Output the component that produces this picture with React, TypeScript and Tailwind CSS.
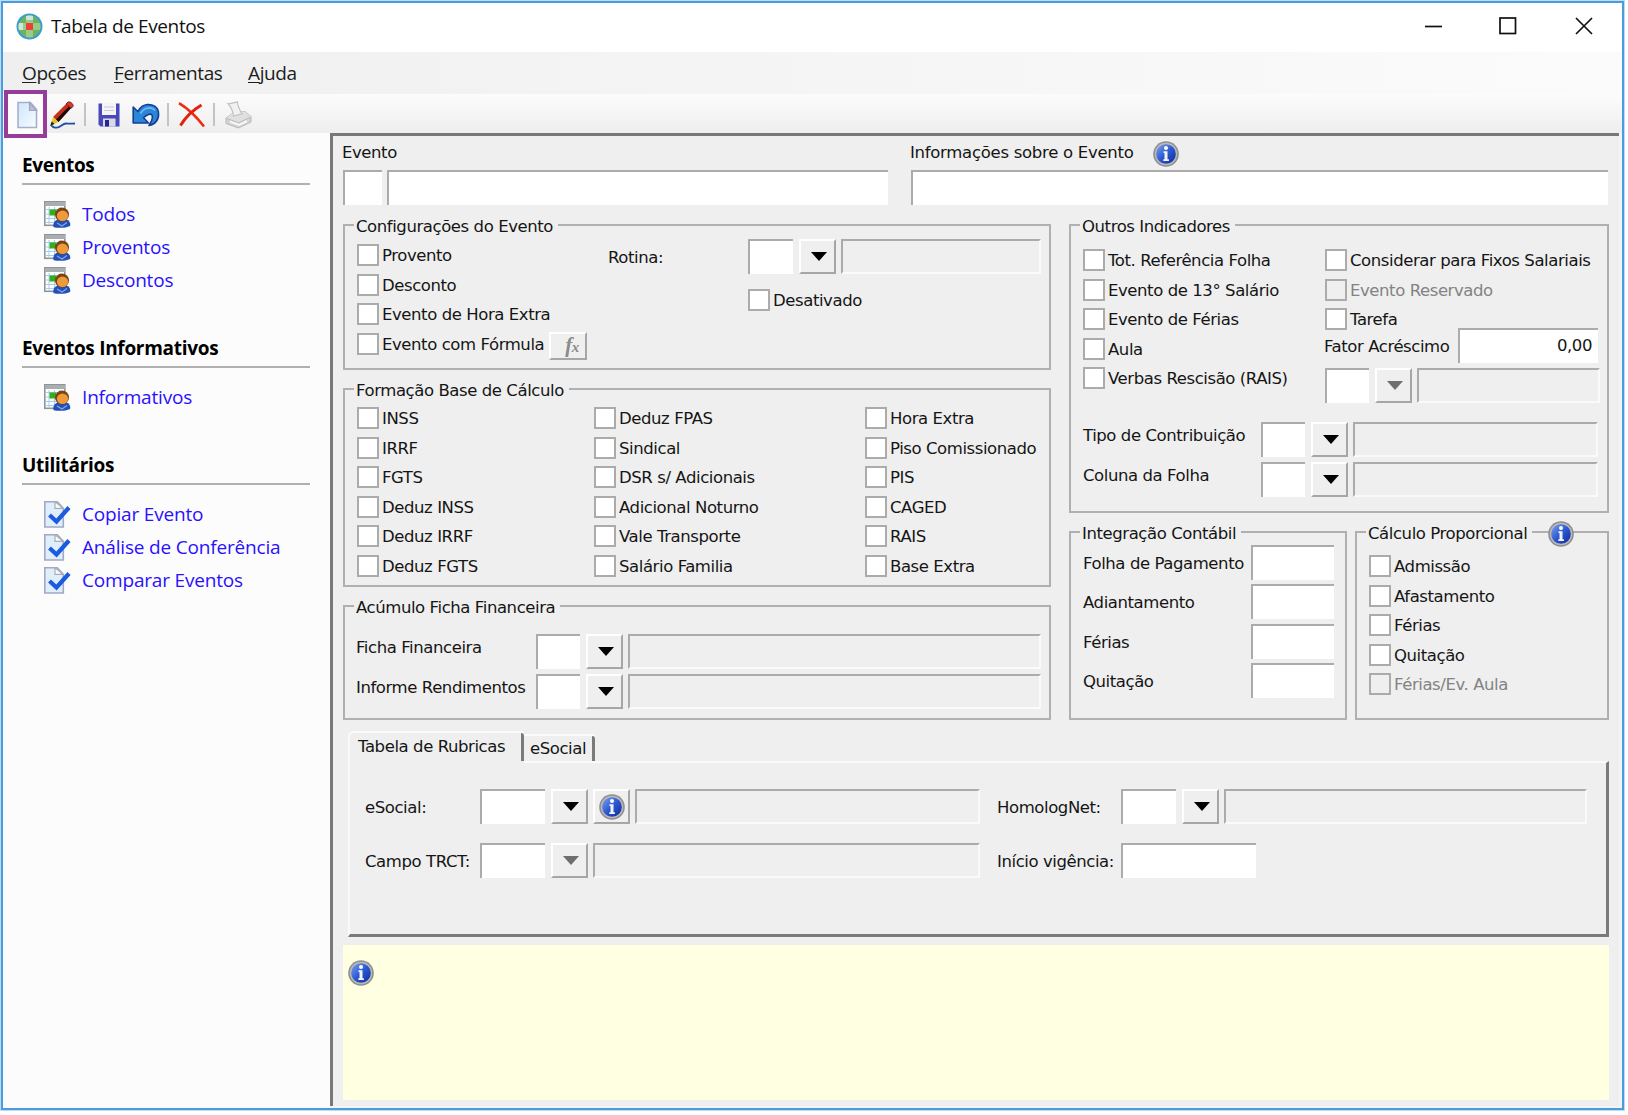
import React from 'react';

const SIDE_SECTIONS = [
  { title: 'Eventos', icon: 'grid', items: ['Todos', 'Proventos', 'Descontos'] },
  { title: 'Eventos Informativos', icon: 'grid', items: ['Informativos'] },
  { title: 'Utilitários', icon: 'check', items: ['Copiar Evento', 'Análise de Conferência', 'Comparar Eventos'] },
];

const BASE_COLUMNS = [
  ['INSS', 'IRRF', 'FGTS', 'Deduz INSS', 'Deduz IRRF', 'Deduz FGTS'],
  ['Deduz FPAS', 'Sindical', 'DSR s/ Adicionais', 'Adicional Noturno', 'Vale Transporte', 'Salário Familia'],
  ['Hora Extra', 'Piso Comissionado', 'PIS', 'CAGED', 'RAIS', 'Base Extra'],
];

/* ---------- icons ---------- */

const AppLogo = () => (
  <svg width="27" height="27" viewBox="0 0 27 27">
    <defs>
      <clipPath id="globe"><circle cx="13.5" cy="13.5" r="11" /></clipPath>
    </defs>
    <circle cx="13.5" cy="13.5" r="13" fill="#3b9bd3" />
    <g clipPath="url(#globe)">
      <rect width="27" height="27" fill="#6db35f" />
      <rect x="10" width="7" height="27" fill="#98cb86" />
      <rect y="10" width="27" height="7" fill="#98cb86" />
      <rect x="10" y="1" width="7" height="6" fill="#cfe6dc" />
      <rect x="1" y="10" width="6" height="7" fill="#cfe6dc" />
    </g>
    <rect x="10" y="10" width="7" height="7" fill="#ec3f3a" />
  </svg>
);

const InfoIcon = () => (
  <svg width="26" height="26" viewBox="0 0 26 26" className="block shrink-0">
    <defs>
      <linearGradient id="info" x1="0" y1="0" x2="1" y2="1">
        <stop offset="0" stopColor="#7ba4f2" />
        <stop offset="0.5" stopColor="#2d58d2" />
        <stop offset="1" stopColor="#0c2a9c" />
      </linearGradient>
    </defs>
    <circle cx="13" cy="13" r="12.8" fill="#8f8f8f" />
    <circle cx="13" cy="13" r="11.2" fill="#b9b9b9" />
    <circle cx="13" cy="13" r="9.8" fill="url(#info)" />
    <circle cx="13" cy="7" r="2" fill="#fff" />
    <path d="M10.5 10.2h4v8h1.4v1.8h-5.6v-1.8h1.2v-6.2h-1z" fill="#f2f4fb" />
  </svg>
);

const NewIcon = () => (
  <svg width="21" height="28" viewBox="0 0 21 28">
    <defs>
      <linearGradient id="sheet" x1="0" y1="0" x2="1" y2="1">
        <stop offset="0" stopColor="#cde6fb" />
        <stop offset="1" stopColor="#f8fcff" />
      </linearGradient>
    </defs>
    <path d="M1 1.5h12.5l6 7V26.5H1z" fill="url(#sheet)" stroke="#a9afca" strokeWidth="1.6" />
    <path d="M12.500 1.500v8h7z" fill="#b9bfce" stroke="#9fa6c4" strokeWidth="1.2" />
  </svg>
);

const PencilIcon = () => (
  <svg width="28" height="28" viewBox="0 0 28 28">
    <path d="M2 24c2 3 6 3.500 9 1.500s4-3 6-3 3 .5 9 0" fill="none" stroke="#1f4fa3" strokeWidth="1.8" />
    <path d="M4 16 18 2l5 4L9.500 21z" fill="#c8301c" />
    <path d="M7 18.500 21 4.300l2 1.700L9.500 21z" fill="#1a0d0a" />
    <path d="M17 3l2-2c2-.7 5 1.200 5.300 4l-2 2.300z" fill="#d43a2a" stroke="#7c1710" strokeWidth="0.8" />
    <path d="M4 16l5.500 5L2 24z" fill="#e9c21d" />
    <path d="M2.700 20.500 1.200 24.700l4.500-1.800z" fill="#222" />
  </svg>
);

const SaveIcon = () => (
  <svg width="22" height="24" viewBox="0 0 22 24">
    <path d="M0.500 0.500h21v23H2.500l-2-2z" fill="#4848b8" />
    <rect x="4" y="0" width="14" height="12" fill="#f4f4f6" />
    <path d="M6 4h10M6 7.500h10" stroke="#c9c9cf" strokeWidth="1.2" />
    <rect x="5" y="15.500" width="12.500" height="8" fill="#d8d8ea" />
    <rect x="7" y="17" width="4" height="6.500" fill="#25258a" />
  </svg>
);

const UndoIcon = () => (
  <svg width="28" height="24" viewBox="0 0 28 24">
    <path
      d="M1.200 4v16h15.300l-5-5.300c3-3 7.500-5 8.700-2.200 1 3-1 6.500-3.200 10C23.500 21.500 27 16.500 26.500 10 26 3.500 20.500 1.200 15.500 1.500 11.500 1.800 8 4.500 5.800 8.500z"
      fill="#2b86d8"
      stroke="#123f96"
      strokeWidth="1.6"
      strokeLinejoin="round"
    />
    <path d="M8.500 10.500c3.500-6 11-7.500 14.500-3" fill="none" stroke="#6fbcf2" strokeWidth="1.6" />
  </svg>
);

const DeleteIcon = () => (
  <svg width="27" height="26" viewBox="0 0 27 26">
    <path d="M1 1.200C9 6 19 15.500 26 24.500" fill="none" stroke="#ee2a10" strokeWidth="2.6" />
    <path d="M23.500 3C15 8 7 16 2.500 23.500" fill="none" stroke="#e0240c" strokeWidth="3" />
  </svg>
);

const PrintIcon = () => (
  <svg width="27" height="28" viewBox="0 0 27 28">
    <path d="M1 17 8 12l12-1.500 6 5v5.500L13.500 27 1 22.500z" fill="#d3d3d3" stroke="#b9b9b9" strokeWidth="1" />
    <path d="M1 17l7-5 12-1.500 6 5-12.500 6z" fill="#e0e0e0" />
    <path d="M3 2.500C6 2.800 9 1.500 12.500.8c0 5 2.500 8.500 4.500 12L8.500 15C8 10 6 6 3 2.500z" fill="#f1f1f1" stroke="#c2c2c2" strokeWidth="1.2" />
    <path d="M5 20.500l9 3.300L22 20" fill="none" stroke="#f7f7f7" strokeWidth="2" />
    <path d="M1.500 17.300 13.500 21.800 26 16" fill="none" stroke="#bdbdbd" strokeWidth="1" />
  </svg>
);

const GridUserIcon = () => (
  <svg width="27" height="27" viewBox="0 0 27 27" className="block shrink-0">
    <rect x="0.800" y="0.800" width="20" height="23.500" fill="#fff" stroke="#8e9498" strokeWidth="1.6" />
    <rect x="1" y="1" width="20" height="4" fill="#a9aeb1" />
    <path d="M1 8.500h20M1 13h20M1 17.500h20M1 21.500h20M5 6v18M10.500 6v18M16 6v18" stroke="#a5cdea" strokeWidth="1" />
    <rect x="5.500" y="8.500" width="6.500" height="6" fill="#2fae1e" />
    <path d="M9.500 26c-1-3 1-6.500 4-7.500h9c3 1 4.500 4.500 3.500 6.500-4 2-12 2.500-16.500 1z" fill="#2450b5" />
    <path d="M13 22l5 3 5-3.500" stroke="#7ea7ee" strokeWidth="1.2" fill="none" />
    <circle cx="18" cy="13.500" r="7" fill="#7b4511" />
    <ellipse cx="18.500" cy="14.700" rx="5.600" ry="5.300" fill="#ef9a3c" />
  </svg>
);

const SheetCheckIcon = () => (
  <svg width="27" height="27" viewBox="0 0 27 27" className="block shrink-0">
    <path d="M0.800 0.800h12.500l6 6.500v18.700H0.800z" fill="#dfeefb" stroke="#a3a8c6" strokeWidth="1.6" />
    <path d="M11 .8v6.500h8z" fill="#fff" stroke="#a9adb5" strokeWidth="1.2" />
    <path d="M5.500 14l7 6.500L25 6.500" fill="none" stroke="#1b5be0" strokeWidth="4.2" />
  </svg>
);

/* ---------- controls ---------- */

const Input = ({ className = '', children }: { className?: string; children?: React.ReactNode }) => (
  <div className={`h-[35px] shrink-0 border-t-2 border-l-2 border-[#ababab] bg-white ${className}`}>{children}</div>
);

const ReadOnly = ({ className = 'flex-1' }: { className?: string }) => (
  <div className={`h-[35px] border-2 border-t-[#ababab] border-l-[#ababab] border-r-[#fafafa] border-b-[#fafafa] ${className}`} />
);

const BevelButton = ({ className = 'w-[37px] h-[35px]', children }: { className?: string; children?: React.ReactNode }) => (
  <button className={`shrink-0 flex items-center justify-center border-2 border-t-white border-l-white border-r-[#a6a6a6] border-b-[#a6a6a6] ${className}`}>
    {children}
  </button>
);

const Arrow = ({ disabled = false }: { disabled?: boolean }) => (
  <svg width="16" height="9" viewBox="0 0 16 9" className="ml-[3px]">
    <path d="M0 0h16L8 9z" fill={disabled ? '#6e6e6e' : '#000'} />
  </svg>
);

const Lookup = ({ disabled = false, code = 'w-[44px]', extra }: { disabled?: boolean; code?: string; extra?: React.ReactNode }) => (
  <div className="flex flex-1">
    <Input className={code} />
    <div className="flex flex-1 gap-[5px] ml-[6px]">
      <BevelButton><Arrow disabled={disabled} /></BevelButton>
      {extra}
      <ReadOnly />
    </div>
  </div>
);

const Check = ({ label, disabled = false, children }: { label: string; disabled?: boolean; children?: React.ReactNode }) => (
  <div className="flex items-start h-[29.6px]">
    <div className={`w-[22px] h-[22px] shrink-0 border-2 border-[#ababab] ${disabled ? 'bg-[#efefef]' : 'bg-white'}`} />
    <span className={`ml-[3px] leading-[24px] ${disabled ? 'text-[#838383]' : ''}`}>{label}</span>
    {children}
  </div>
);

const Group = ({ title, className = '', children }: { title: string; className?: string; children?: React.ReactNode }) => (
  <section className={`relative border-2 border-[#b0b0b0] ${className}`}>
    <h3 className="absolute left-[9px] -top-[10px] bg-[#efefef] pl-[2px] pr-[5px] leading-[22px]">{title}</h3>
    {children}
  </section>
);

/* ---------- window parts ---------- */

const TitleBar = () => (
  <header className="h-[49px] bg-white flex items-center pb-[2px] pl-[13px] pr-[29px] font-['Open_Sans','Noto_Sans',sans-serif]">
    <AppLogo />
    <h1 className="ml-2 flex-1 text-[19px] tracking-[-0.38px] text-[#111]">Tabela de Eventos</h1>
    <svg width="168" height="18" viewBox="0 0 168 18" fill="none" stroke="#111" strokeWidth="1.7" className="-mt-[2px]">
      <path d="M0 9.500h17" />
      <rect x="75" y="1" width="15.500" height="15.500" />
      <path d="M151 1l16 16M167 1l-16 16" />
    </svg>
  </header>
);

const MenuBar = () => (
  <nav className="h-[42px] flex pl-[19px] text-[19px] leading-[43px] tracking-[-0.4px] text-[#1c1c1c] bg-gradient-to-r from-[#efefef] to-[#fbfbfb] font-['Open_Sans','Noto_Sans',sans-serif]">
    <span className="w-[92px]"><u className="underline-offset-2">O</u>pções</span>
    <span className="w-[134px]"><u className="underline-offset-2">F</u>erramentas</span>
    <span><u className="underline-offset-2">A</u>juda</span>
  </nav>
);

const Separator = ({ className }: { className: string }) => <div className={`w-[2px] h-[23px] bg-[#c3c3c3] ${className}`} />;

const ToolBar = () => (
  <div className="h-[39px] flex items-center bg-gradient-to-b from-[#fcfcfc] to-[#eeeeee]">
    <button className="relative z-10 w-[43px] h-[48px] ml-[1px] pl-[3px] pt-[2px] flex items-center justify-center shrink-0 border-4 border-[#963c9a] bg-[#fcfcfc]">
      <NewIcon />
    </button>
    <div className="ml-[2px] mt-[2px]"><PencilIcon /></div>
    <Separator className="ml-[7px] mt-[2px]" />
    <div className="ml-[12px] mt-[2px]"><SaveIcon /></div>
    <div className="ml-[12px] mt-[3px]"><UndoIcon /></div>
    <Separator className="ml-[7px] mt-[2px]" />
    <div className="ml-[9px] mt-[3px]"><DeleteIcon /></div>
    <Separator className="ml-[8px] mt-[2px]" />
    <div className="ml-[10px] mt-[2px]"><PrintIcon /></div>
  </div>
);

const SideBar = () => (
  <aside className="w-[327px] shrink-0 bg-[#fcfcfc] pl-[19px] pr-[20px] pt-[18px] text-[19px] font-['Open_Sans','Noto_Sans',sans-serif]">
    {SIDE_SECTIONS.map(section => (
      <div key={section.title} className="mb-[34px]">
        <h2 className="h-[34px] leading-[29px] font-bold text-black tracking-[-0.3px] border-b-2 border-[#b0b0b0]">{section.title}</h2>
        <ul className="pt-[16px] pl-[22px]">
          {section.items.map(item => (
            <li key={item} className="flex h-[33px] text-[#2a10ff] leading-[26px] tracking-[-0.18px]">
              {section.icon === 'grid' ? <GridUserIcon /> : <SheetCheckIcon />}
              <span className="ml-[11px]">{item}</span>
            </li>
          ))}
        </ul>
      </div>
    ))}
  </aside>
);

const Configuracoes = () => (
  <Group title="Configurações do Evento" className="h-[146px] flex pl-[12px] pr-[8px]">
    <div className="w-[251px] pt-[18px]">
      <Check label="Provento" />
      <Check label="Desconto" />
      <Check label="Evento de Hora Extra" />
      <Check label="Evento com Fórmula">
        <BevelButton className="w-[38px] h-[28px] -mt-px ml-auto mr-[21px]">
          <span className="font-['Liberation_Serif',serif] italic font-bold text-[21px] leading-none text-[#8b8b8b] ml-2">
            f<span className="text-[15px]">x</span>
          </span>
        </BevelButton>
      </Check>
    </div>
    <div className="flex-1 pt-[13px]">
      <div className="flex">
        <span className="w-[140px] leading-[38px]">Rotina:</span>
        <Lookup code="w-[45px]" />
      </div>
      <div className="ml-[140px] mt-[12px]">
        <Check label="Desativado" />
      </div>
    </div>
  </Group>
);

const BaseCalculo = () => (
  <Group title="Formação Base de Cálculo" className="h-[199px] mt-[18px] pl-[12px] pt-[17px] grid grid-cols-[237px_271px_1fr]">
    {BASE_COLUMNS.map(col => (
      <div key={col[0]}>{col.map(label => <Check key={label} label={label} />)}</div>
    ))}
  </Group>
);

const FichaFinanceira = () => (
  <Group title="Acúmulo Ficha Financeira" className="h-[115px] mt-[18px] pl-[11px] pr-[8px] pt-[27px] flex flex-col gap-[5px]">
    {['Ficha Financeira', 'Informe Rendimentos'].map(label => (
      <div key={label} className="flex">
        <span className="w-[180px] leading-[27px]">{label}</span>
        <Lookup />
      </div>
    ))}
  </Group>
);

const OutrosIndicadores = () => (
  <Group title="Outros Indicadores" className="h-[289px] pl-[12px] pr-[9px] pt-[23px]">
    <div className="flex h-[153px]">
      <div className="w-[242px]">
        <Check label="Tot. Referência Folha" />
        <Check label="Evento de 13° Salário" />
        <Check label="Evento de Férias" />
        <Check label="Aula" />
        <Check label="Verbas Rescisão (RAIS)" />
      </div>
      <div className="flex-1 -mr-[2px]">
        <Check label="Considerar para Fixos Salariais" />
        <Check label="Evento Reservado" disabled />
        <Check label="Tarefa" />
        <div className="flex -mt-[10px] mb-[2px]">
          <span className="w-[134px] leading-[38px] -ml-px">Fator Acréscimo</span>
          <Input className="w-[140px] text-right pr-[6px] leading-[31px]">0,00</Input>
        </div>
        <Lookup disabled />
      </div>
    </div>
    <div className="mt-[20px] flex flex-col gap-[5px]">
      {['Tipo de Contribuição', 'Coluna da Folha'].map(label => (
        <div key={label} className="flex">
          <span className="w-[178px] leading-[27px]">{label}</span>
          <Lookup />
        </div>
      ))}
    </div>
  </Group>
);

const Integracao = () => (
  <Group title="Integração Contábil" className="w-[278px] h-[189px] pl-[12px] pt-[12px]">
    {['Folha de Pagamento', 'Adiantamento', 'Férias', 'Quitação'].map(label => (
      <div key={label} className="flex h-[39.4px]">
        <span className="w-[168px] leading-[37px]">{label}</span>
        <Input className="w-[83px]" />
      </div>
    ))}
  </Group>
);

const Proporcional = () => (
  <Group title="Cálculo Proporcional" className="w-[254px] h-[189px] pl-[12px] pt-[22px]">
    <div className="absolute left-[191px] -top-[12px]"><InfoIcon /></div>
    <Check label="Admissão" />
    <Check label="Afastamento" />
    <Check label="Férias" />
    <Check label="Quitação" />
    <Check label="Férias/Ev. Aula" disabled />
  </Group>
);

const Tabs = () => (
  <div className="ml-[5px] mt-[11px]">
    <div className="flex items-end h-[30px]">
      <div className="relative z-10 w-[176px] h-[32px] -mb-[2px] pl-[8px] leading-[28px] bg-[#efefef] border-t-2 border-l-2 border-t-[#fafafa] border-l-[#fafafa] rounded-tl-md flex justify-between">
        Tabela de Rubricas
        <i className="w-[3px] h-[28px] bg-[#7a7a7a] rounded-tr" />
      </div>
      <div className="w-[71px] h-[27px] pl-[6px] leading-[25px] border-t-2 border-[#fafafa] flex justify-between">
        eSocial
        <i className="w-[3px] h-[25px] bg-[#7a7a7a] rounded-tr" />
      </div>
    </div>
    <div className="w-[1261px] h-[176px] pl-[15px] pt-[26px] border-t-2 border-l-2 border-t-[#fafafa] border-l-[#fafafa] border-r-[3px] border-b-[3px] border-r-[#7a7a7a] border-b-[#7a7a7a] flex">
      <div className="w-[615px] flex flex-col gap-[17px]">
        <div className="flex">
          <span className="w-[115px] leading-[37px]">eSocial:</span>
          <Lookup code="w-[65px]" extra={<BevelButton><InfoIcon /></BevelButton>} />
        </div>
        <div className="flex">
          <span className="w-[115px] leading-[37px]">Campo TRCT:</span>
          <Lookup code="w-[65px]" disabled />
        </div>
      </div>
      <div className="w-[590px] ml-[17px] flex flex-col gap-[17px]">
        <div className="flex">
          <span className="w-[124px] leading-[37px]">HomologNet:</span>
          <Lookup code="w-[55px]" />
        </div>
        <div className="flex">
          <span className="w-[124px] leading-[37px]">Início vigência:</span>
          <Input className="w-[135px]" />
        </div>
      </div>
    </div>
  </div>
);

const App: React.FC = () => (
  <div className="w-[1628px] h-[1115px] bg-white overflow-hidden">
    <div className="w-[1625px] h-[1111px] border border-[#bfdcf3]">
      <div className="h-full border-2 border-[#4a9ce0] flex flex-col">
        <TitleBar />
        <MenuBar />
        <ToolBar />
        <div className="flex-1 flex min-h-0 bg-[#f4f4f4]">
          <SideBar />
          <main className="w-[1289px] mb-[2px] border-t-[3px] border-l-[3px] border-[#787878] bg-[#efefef] pl-[10px] pt-[6px] text-[16.5px] tracking-[-0.42px] text-[#151515] whitespace-nowrap font-['DejaVu_Sans',sans-serif]">
            <div className="flex gap-[23px]">
              <div className="w-[545px]">
                <label className="block h-[28px] leading-[22px] -ml-px">Evento</label>
                <div className="flex gap-[5px]">
                  <Input className="w-[39px]" />
                  <Input className="flex-1" />
                </div>
              </div>
              <div className="w-[697px]">
                <div className="flex h-[28px]">
                  <label className="w-[243px] leading-[22px] -ml-px tracking-[-0.28px]">Informações sobre o Evento</label>
                  <div className="-mt-px"><InfoIcon /></div>
                </div>
                <Input />
              </div>
            </div>

            <div className="flex mt-[19px] gap-[18px]">
              <div className="w-[708px]">
                <Configuracoes />
                <BaseCalculo />
                <FichaFinanceira />
              </div>
              <div className="w-[540px]">
                <OutrosIndicadores />
                <div className="flex justify-between mt-[18px]">
                  <Integracao />
                  <Proporcional />
                </div>
              </div>
            </div>

            <Tabs />

            <div className="w-[1266px] h-[155px] mt-[8px] bg-[#ffffe1] pl-[5px] pt-[15px]">
              <InfoIcon />
            </div>
          </main>
        </div>
      </div>
    </div>
  </div>
);

export default App;
